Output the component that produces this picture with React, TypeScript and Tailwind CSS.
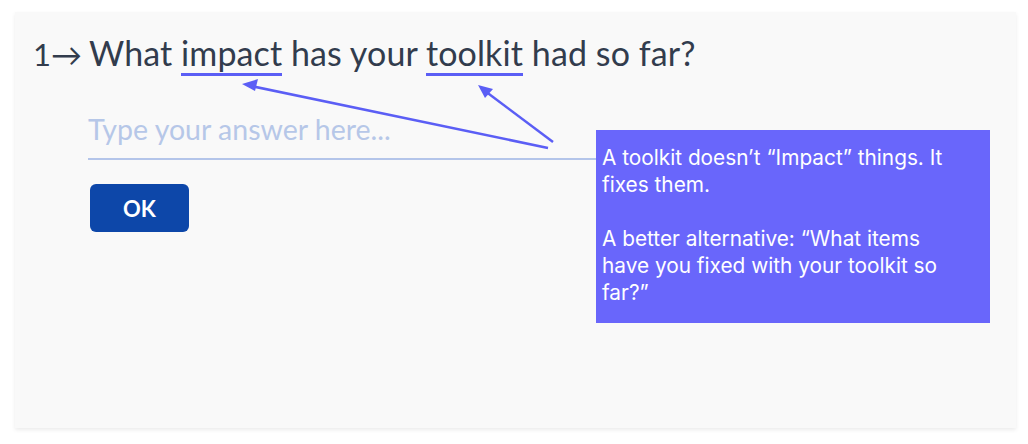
import React from 'react';

const App: React.FC = () => {
  return (
    <div className="w-[1028px] h-[444px] bg-white pt-[12px] pl-[15px]">
      <div className="relative w-[1001px] h-[416px] bg-[#f9f9f9] shadow-[0_2px_4px_rgba(0,0,0,0.08)] pt-[19px] pl-[18px]">
        <h1 className="flex items-baseline text-[34px] leading-[44px] text-[#323c4d] font-['Lato',sans-serif]">
          <span className="w-[56px] text-[31px]">1→</span>
          <span className="tracking-[0.1px]">
            What <span className="relative">impact<span className="absolute left-0 right-0 -bottom-[3px] h-[3px] bg-[#5b5ef5]" /></span> has your{' '}
            <span className="relative">toolkit<span className="absolute left-0 right-0 -bottom-[3px] h-[3px] bg-[#5b5ef5]" /></span> had so far?
          </span>
        </h1>

        <div className="ml-[55px] mt-[35px] w-[508px] border-b-[2px] border-[#b4c5ea] pb-[11px]">
          <div className="text-[28.5px] leading-[36px] text-[#b6c7e8] font-['Lato',sans-serif]">Type your answer here...</div>
        </div>

        <button className="ml-[57px] mt-[24px] w-[99px] h-[48px] rounded-[6px] bg-[#0d47a9] text-white text-[22px] font-bold font-['Lato',sans-serif]">
          OK
        </button>

        {/* note */}
        <div className="absolute left-[581px] top-[118px] w-[394px] h-[193px] bg-[#6966fb] pl-[6px] pr-[20px] pt-[14px] text-white text-[20.8px] leading-[27px] font-['Inter',sans-serif]">
          <p>A toolkit doesn’t “Impact” things. It fixes them.</p>
          <p className="mt-[27px]">A better alternative: “What items have you fixed with your toolkit so far?”</p>
        </div>

        {/* arrows */}
        <svg className="absolute left-0 top-0" width="1001" height="416" viewBox="0 0 1001 416">
          <g stroke="#5b5ef5" strokeWidth="2.5" fill="#5b5ef5">
            <line x1="533" y1="136" x2="236" y2="74" />
            <polygon points="227,72 243,67 240,79" stroke="none" />
            <line x1="538" y1="130" x2="470" y2="79" />
            <polygon points="463,73 478,77 470,86" stroke="none" />
          </g>
        </svg>
      </div>
    </div>
  );
};

export default App;
